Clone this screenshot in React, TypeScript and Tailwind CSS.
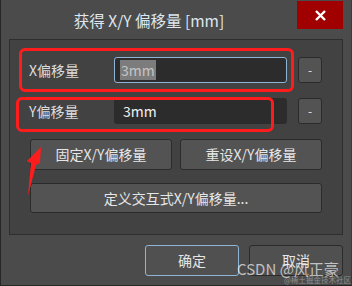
import React from "react";

const font = { fontFamily: '"Noto Sans CJK SC", "Noto Sans", sans-serif' };

export default function App() {
  return (
    <div
      className="relative w-[352px] h-[286px] overflow-hidden bg-[#4b4b4b] border-l border-b border-r border-l-[#262626] border-b-[#262626] border-r-[#3a3a3a] text-[#e6e6e6] flex flex-col"
      style={font}
    >
      {/* 标题栏 */}
      <div className="flex h-[39px] shrink-0">
        <div className="flex-1 text-center text-[15.5px] leading-[39px] pt-[1px] text-[#dfe6ee]">
          获得 X/Y 偏移量 [mm]
        </div>
        <div className="mt-[1px] mr-[8px] w-[46px] h-[28px] bg-[#a00000] flex items-center justify-center">
          <svg width="11" height="11" viewBox="0 0 11 11">
            <path d="M1 1 L10 10 M10 1 L1 10" stroke="#fff" strokeWidth="2.4" />
          </svg>
        </div>
      </div>

      {/* 面板 */}
      <div className="relative mx-[8px] h-[196px] shrink-0 bg-[#424242] border border-[#2e2e2e] pt-[17px] px-[19px] flex flex-col">
        <div className="flex items-center h-[26px]">
          <span className="w-[85px] text-[14px] text-[#dcdcdc]">X偏移量</span>
          <div className="w-[173px] h-[26px] bg-[#2c2c2c] border border-[#8fb4d6] rounded-[3px] flex items-center px-[5px]">
            <span className="bg-[#7c7c7c] text-[#c4c4c4] text-[14px] leading-[20px] px-[1px]">3mm</span>
          </div>
          <div className="ml-[11px] w-[24px] h-[26px] bg-[#535353] border border-[#2b2b2b] rounded-[3px] flex items-center justify-center text-[12px]">-</div>
        </div>
        <div className="flex items-center h-[26px] mt-[15px]">
          <span className="w-[85px] text-[14px] text-[#dcdcdc]">Y偏移量</span>
          <div className="w-[173px] h-[26px] bg-[#2c2c2c] rounded-[3px] flex items-center px-[9px]">
            <span className="text-[#f0f0f0] text-[14px]">3mm</span>
          </div>
          <div className="ml-[11px] w-[24px] h-[26px] bg-[#535353] border border-[#2b2b2b] rounded-[3px] flex items-center justify-center text-[12px]">-</div>
        </div>
        <div className="flex gap-[8px] mt-[15px] ml-[1px]">
          <div className="w-[142px] h-[31px] bg-[#535353] border border-[#2b2b2b] rounded-[3px] flex items-center justify-center text-[14px]">固定X/Y偏移量</div>
          <div className="w-[142px] h-[31px] bg-[#535353] border border-[#2b2b2b] rounded-[3px] flex items-center justify-center text-[14px]">重设X/Y偏移量</div>
        </div>
        <div className="mt-[13px] ml-[1px] w-[292px] h-[30px] bg-[#535353] border border-[#2b2b2b] rounded-[3px] flex items-center justify-center text-[14px]">定义交互式X/Y偏移量...</div>

        {/* 红框标注 */}
        <div className="absolute left-[9px] top-[8px] w-[275px] h-[44px] border-[3px] border-[#ff1c1c] rounded-[6px]" />
        <div className="absolute left-[6px] top-[57px] w-[258px] h-[35px] border-[3px] border-[#ff1c1c] rounded-[6px]" />
      </div>

      {/* 底部按钮 */}
      <div className="flex justify-end gap-[10px] mt-[10px] mr-[8px]">
        <div className="w-[94px] h-[31px] bg-[#505050] border border-[#8fb4d6] rounded-[3px] flex items-center justify-center text-[14px]">确定</div>
        <div className="w-[94px] h-[31px] bg-[#505050] border border-[#2b2b2b] rounded-[3px] flex items-center justify-center text-[14px]">取消</div>
      </div>

      {/* 箭头 */}
      <svg className="absolute left-0 top-0" width="352" height="286" viewBox="0 0 352 286">
        <polygon points="40,147 39,163 35,165 27,196 30,163 26,161" fill="#ff1c1c" />
      </svg>

      {/* 水印 */}
      <div className="absolute left-[236px] top-[258px] text-[15px] text-[#ffffffa8] leading-[22px]">CSDN @风正豪</div>
      <div className="absolute left-[283px] top-[275px] text-[7.5px] text-[#ffffff60] leading-[9px] whitespace-nowrap">@稀土掘金技术社区</div>
    </div>
  );
}
